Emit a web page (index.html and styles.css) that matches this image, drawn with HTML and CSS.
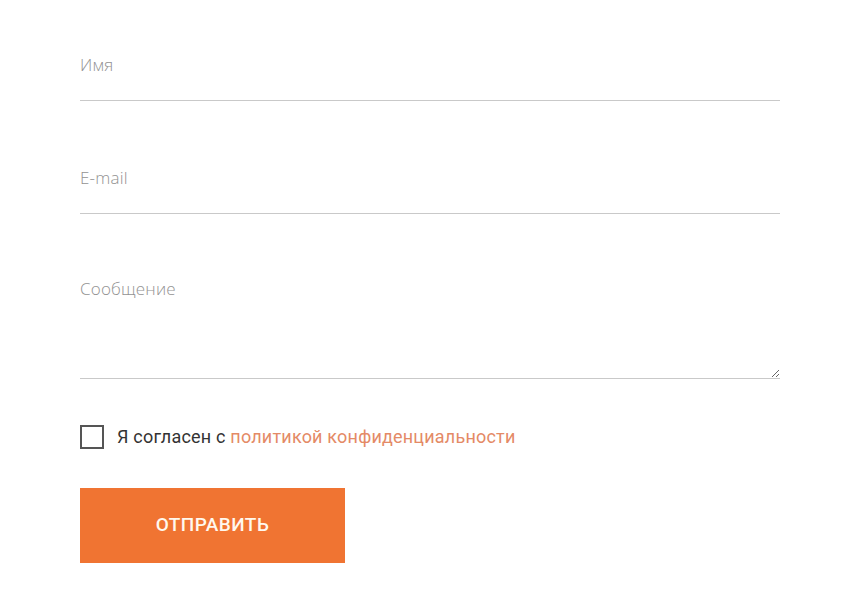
FILE: index.html
```html
<!DOCTYPE html>
<html lang="ru">
<head>
<meta charset="utf-8">
<link rel="stylesheet" href="styles.css">
</head>
<body>
<form class="form">
  <input class="field" type="text" placeholder="Имя">
  <input class="field" type="email" placeholder="E-mail">
  <textarea class="field area" placeholder="Сообщение"></textarea>
  <label class="agree">
    <span class="box"></span>
    <span class="agree-text">Я согласен с <a href="#" class="link">политикой конфиденциальности</a></span>
  </label>
  <button type="button" class="submit">ОТПРАВИТЬ</button>
</form>
</body>
</html>
```
FILE: styles.css
```css
html, body {
  margin: 0;
  padding: 0;
  background: #fff;
}
.form {
  display: flex;
  flex-direction: column;
  width: 700px;
  padding: 30px 0 0 80px;
}
.field {
  display: block;
  box-sizing: border-box;
  width: 700px;
  height: 71px;
  border: none;
  border-bottom: 1px solid #c9c9c9;
  outline: none;
  padding: 0 0 2px 0;
  font-family: "Open Sans", sans-serif;
  font-weight: 300;
  font-size: 17px;
  letter-spacing: 0.2px;
  color: #333;
  margin-bottom: 42px;
  background: transparent;
}
.field::placeholder {
  color: #929292;
}
.area {
  height: 123px;
  padding-top: 22px;
  line-height: 22px;
  resize: vertical;
  margin-bottom: 46px;
}
.agree {
  display: flex;
  align-items: center;
  gap: 13px;
  font-family: Roboto, sans-serif;
  font-size: 18px;
  letter-spacing: 0.2px;
  color: #333;
}
.agree-text {
  position: relative;
  top: -1px;
}
.box {
  box-sizing: border-box;
  width: 24px;
  height: 24px;
  border: 2px solid #555;
}
.link {
  color: #e48a66;
  text-decoration: none;
}
.submit {
  margin-top: 39px;
  width: 265px;
  height: 75px;
  border: none;
  background: #f07432;
  color: #fff8ee;
  font-family: Roboto, sans-serif;
  font-weight: 500;
  font-size: 19px;
  letter-spacing: 0.4px;
  padding: 0 0 2px 0;
  cursor: pointer;
}
```
